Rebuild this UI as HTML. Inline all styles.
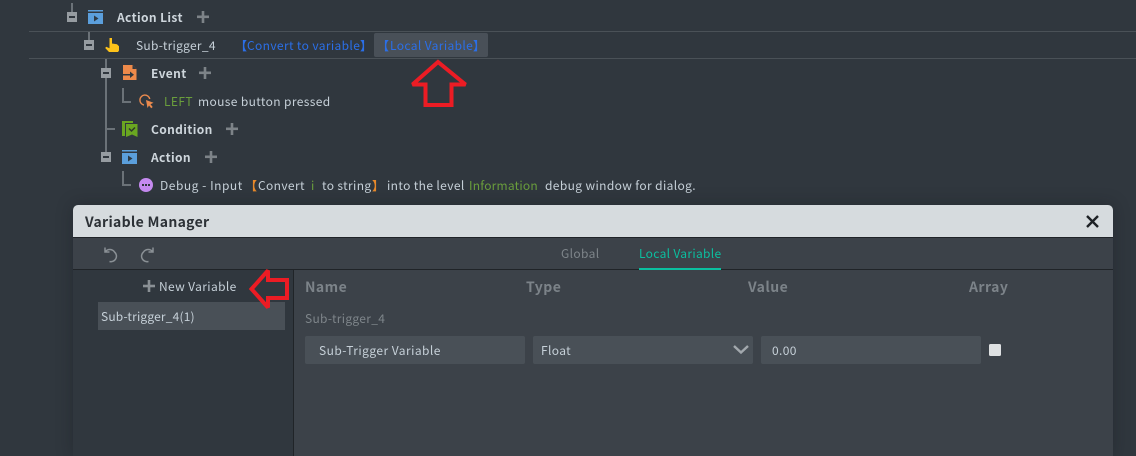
<!DOCTYPE html>
<html><head><meta charset="utf-8">
<style>
html,body{margin:0;padding:0;background:#30373e;}
#r{position:relative;width:1136px;height:456px;overflow:hidden;background:#30373e;font-family:"Noto Sans CJK SC","Liberation Sans",sans-serif;font-size:12px;letter-spacing:.37px;color:#c6d0d8;}
.t{position:absolute;white-space:pre;line-height:16px;height:16px;margin-top:1px;}
.b{font-weight:700;color:#ced6dc;}
.a{position:absolute;}
.g{color:#6a9e3c}
.bl{color:#2b6fe8}
.h{font-size:14px;font-weight:700;color:#7c8389;letter-spacing:.45px;}
svg{position:absolute;overflow:visible;}
.inp{position:absolute;background:#495057;border-radius:2px;height:28px;top:336px;}
</style></head><body><div id="r">

<!-- row lines -->
<div class="a" style="left:29px;top:31px;width:1107px;height:1px;background:#4a5157"></div>
<div class="a" style="left:29px;top:58px;width:1107px;height:1px;background:#4a5157"></div>
<div class="a" style="left:374px;top:33px;width:114px;height:24px;background:#495058;border-radius:2px"></div>

<!-- tree svg -->
<svg style="left:0;top:0" width="1136" height="210">
  <g fill="#6b7278">
    <rect x="71" y="3" width="2" height="9"/>
    <rect x="88" y="32" width="2" height="9"/>
    <rect x="105" y="59" width="2" height="94"/>
    <rect x="122" y="88" width="2" height="14"/><rect x="122" y="101" width="9" height="2"/>
    <rect x="107" y="128" width="8" height="2"/>
    <rect x="122" y="171" width="2" height="14"/><rect x="122" y="184" width="9" height="2"/>
  </g>
  <g>
    <rect x="67" y="12" width="10" height="10" fill="#969ca1"/><rect x="69" y="16" width="6" height="2" fill="#30373e"/>
    <rect x="84" y="40" width="10" height="10" fill="#969ca1"/><rect x="86" y="44" width="6" height="2" fill="#30373e"/>
    <rect x="101" y="68" width="10" height="10" fill="#969ca1"/><rect x="103" y="72" width="6" height="2" fill="#30373e"/>
    <rect x="101" y="152" width="10" height="10" fill="#969ca1"/><rect x="103" y="156" width="6" height="2" fill="#30373e"/>
  </g>
  <!-- action list icon -->
  <rect x="88" y="10" width="15" height="1.500" fill="#5b9fdc"/>
  <rect x="88" y="13" width="15" height="11" fill="#5b9fdc"/>
  <path d="M94 15.500v6l4.500-3z" fill="#2e3a44"/>
  <!-- hand -->
  <path d="M109.500 38h2.500v5.500l5 .8 2 2v4.200l-1 1.500h-9l-3.800-4 1-1.300 3.300 1.500z" fill="#fdc21a"/>
  <!-- event icon -->
  <path d="M123 65h9.500l4 4v11h-13.500z" fill="#ee8a4a"/>
  <path d="M132.500 65l4 4h-4z" fill="#30373e"/>
  <path d="M123 74h7v-2.500l4 3.300-4 3.200v-2.500h-7z" fill="#30373e"/>
  <!-- cursor -->
  <path d="M144 105a5 5 0 1 1 5.800-6" fill="none" stroke="#ea8a4e" stroke-width="1.400"/>
  <path d="M146 100l7.500 2.800-3 1.500 2.200 2.700-1.500 1.200-2.200-2.700-1.500 2.500z" fill="#ea8a4e"/>
  <!-- condition -->
  <path d="M122 121h11v2h-8v13h-3z" fill="#6aa621"/>
  <path d="M126 124h11.500v13l-5.500-2.500-6 2.500z" fill="#6aa621"/>
  <path d="M129 128.500l2.500 2.500 3.500-3.500" fill="none" stroke="#2d3a2a" stroke-width="1.500"/>
  <!-- action icon -->
  <rect x="122" y="150" width="15" height="1.500" fill="#5b9fdc"/>
  <rect x="122" y="153" width="15" height="11" fill="#5b9fdc"/>
  <path d="M128 155.500v6l4.500-3z" fill="#2e3a44"/>
  <!-- debug icon -->
  <circle cx="146" cy="185" r="7" fill="#c58af0"/>
  <rect x="142" y="184" width="2" height="2" fill="#30373e"/><rect x="145" y="184" width="2" height="2" fill="#30373e"/><rect x="148" y="184" width="2" height="2" fill="#30373e"/>
  <!-- plus -->
  <g fill="#7d8388">
    <rect x="197" y="15.500" width="12" height="2.600"/><rect x="201.700" y="11" width="2.600" height="12"/>
    <rect x="199" y="71.500" width="12" height="2.600"/><rect x="203.700" y="67" width="2.600" height="12"/>
    <rect x="226" y="127.500" width="12" height="2.600"/><rect x="230.700" y="123" width="2.600" height="12"/>
    <rect x="205" y="155.500" width="12" height="2.600"/><rect x="209.700" y="151" width="2.600" height="12"/>
  </g>
</svg>

<div class="t b" style="left:117px;top:9px">Action List</div>
<div class="t" style="left:136px;top:37px;letter-spacing:.27px">Sub-trigger_4</div>
<div class="t bl" style="left:235px;top:37px;font-weight:700;letter-spacing:0">【</div>
<div class="t bl" style="left:247px;top:37px">Convert to variable</div>
<div class="t bl" style="left:360px;top:37px;font-weight:700;letter-spacing:0">】</div>
<div class="t bl" style="left:377px;top:37px;font-weight:700;letter-spacing:0">【</div>
<div class="t bl" style="left:390px;top:37px">Local Variable</div>
<div class="t bl" style="left:473px;top:37px;font-weight:700;letter-spacing:0">】</div>
<div class="t b" style="left:151px;top:65px">Event</div>
<div class="t g" style="left:164px;top:93px">LEFT</div>
<div class="t" style="left:198px;top:93px">mouse button pressed</div>
<div class="t b" style="left:151px;top:121px">Condition</div>
<div class="t b" style="left:151px;top:149px">Action</div>
<div class="t" style="left:160px;top:177px;letter-spacing:.52px">Debug - Input</div>
<div class="t" style="left:245px;top:177px;color:#e8892a;font-weight:700;letter-spacing:0">【</div>
<div class="t" style="left:258px;top:177px">Convert</div>
<div class="t g" style="left:311px;top:177px">i</div>
<div class="t" style="left:322px;top:177px">to string</div>
<div class="t" style="left:372px;top:177px;color:#e8892a;font-weight:700;letter-spacing:0">】</div>
<div class="t" style="left:387px;top:177px">into the level</div>
<div class="t g" style="left:469px;top:177px;letter-spacing:.2px">Information</div>
<div class="t" style="left:545px;top:177px">debug window for dialog.</div>

<!-- modal -->
<div class="a" style="left:73px;top:205px;width:1040px;height:251px;background:#3c4249;border-radius:5px 5px 0 0;box-shadow:0 0 16px rgba(20,24,28,.35);overflow:hidden">
  <div class="a" style="left:0;top:0;width:1040px;height:32px;background:#d6dbde"></div>
  <div class="a" style="left:0;top:32px;width:1040px;height:1px;background:#202428"></div>
  <div class="a" style="left:0;top:64px;width:1040px;height:1px;background:#202428"></div>
  <div class="a" style="left:0;top:65px;width:220px;height:186px;background:#30373e"></div>
  <div class="a" style="left:220px;top:65px;width:1px;height:186px;background:#202428"></div>
  <div class="a" style="left:25px;top:97px;width:187px;height:28px;background:#495057"></div>
  <div class="a" style="left:566px;top:63px;width:82px;height:2px;background:#0bbfa0"></div>
</div>
<div class="t" style="left:85px;top:213px;font-size:14px;font-weight:700;color:#2c3136;letter-spacing:.3px">Variable Manager</div>
<svg style="left:0;top:0" width="1136" height="456">
  <path d="M1087 216l11 11M1098 216l-11 11" stroke="#1e2226" stroke-width="2.400" fill="none"/>
  <path d="M105 247.500v4.500h4.500M105.500 251.500c2.500-3 7-2.500 9 .5a5.500 5.500 0 0 1-5 9.500" fill="none" stroke="#8a9095" stroke-width="1.500"/>
  <path d="M153 247.500v4.500h-4.500M152.500 251.500c-2.500-3-7-2.500-9 .5a5.500 5.500 0 0 0 5 9.500" fill="none" stroke="#8a9095" stroke-width="1.500"/>
  <rect x="143" y="284.700" width="12" height="2.600" fill="#8a9095"/><rect x="147.700" y="280" width="2.600" height="12" fill="#8a9095"/>
  <rect x="989" y="344" width="12" height="12" rx="1.500" fill="#dfe1e3"/>
  <!-- red arrows -->
  <path d="M438 62L412.500 84.500H425.500V105H451.500V84.500H465.500Z" fill="none" stroke="#ec1c24" stroke-width="4" stroke-miterlimit="2"/>
  <path d="M251.500 289L268 270.500V280H287V298H268V307.500Z" fill="none" stroke="#ec1c24" stroke-width="4" stroke-miterlimit="2"/>
</svg>
<div class="t" style="left:159px;top:278px;color:#c6d0d8">New Variable</div>
<div class="t" style="left:101px;top:308px;color:#c6d0d8;letter-spacing:.17px">Sub-trigger_4(1)</div>
<div class="t" style="left:561px;top:245px;color:#7e858a">Global</div>
<div class="t" style="left:639px;top:245px;color:#0bbfa0;letter-spacing:.32px">Local Variable</div>
<div class="t h" style="left:305px;top:278px">Name</div>
<div class="t h" style="left:526px;top:278px">Type</div>
<div class="t h" style="left:748px;top:278px">Value</div>
<div class="t h" style="left:969px;top:278px">Array</div>
<div class="t" style="left:305px;top:310px;color:#7e858a;letter-spacing:.3px">Sub-trigger_4</div>
<div class="inp" style="left:305px;width:220px"></div>
<div class="inp" style="left:533px;width:220px"></div>
<div class="inp" style="left:761px;width:220px"></div>
<svg style="left:0;top:0" width="1136" height="456"><path d="M734 346l7 6.500 7-6.500" fill="none" stroke="#a2a8ad" stroke-width="2.400"/></svg>
<div class="t" style="left:319px;top:342px;letter-spacing:.45px">Sub-Trigger Variable</div>
<div class="t" style="left:541px;top:342px">Float</div>
<div class="t" style="left:772px;top:342px">0.00</div>
</div></body></html>
